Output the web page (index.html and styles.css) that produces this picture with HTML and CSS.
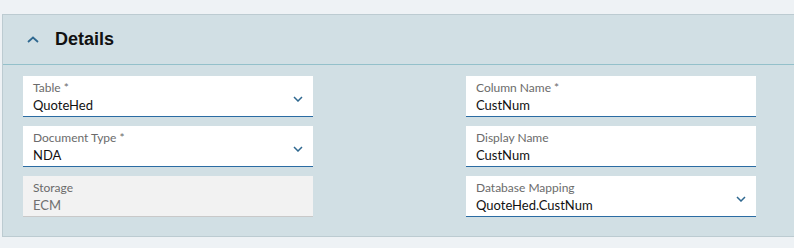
FILE: index.html
```html
<!DOCTYPE html>
<html lang="en">
<head>
    <meta charset="UTF-8">
    <title>Details</title>
    <link rel="stylesheet" href="styles.css">
</head>
<body>
    <div class="panel">
        <div class="panel-header">
            <svg class="toggle" width="12" height="7" viewBox="0 0 12 7">
                <path d="M1 6 L6 1.5 L11 6" fill="none" stroke="#2f6890" stroke-width="1.8"/>
            </svg>
            <h2>Details</h2>
        </div>

        <div class="panel-body">
            <div class="field">
                <div class="text">
                    <div class="label">Table *</div>
                    <div class="value">QuoteHed</div>
                </div>
                <svg class="caret" width="10" height="6" viewBox="0 0 10 6">
                    <path d="M1 1 L5 5 L9 1" fill="none" stroke="#2f6890" stroke-width="1.5"/>
                </svg>
            </div>
            <div class="field">
                <div class="text">
                    <div class="label">Column Name *</div>
                    <div class="value">CustNum</div>
                </div>
            </div>

            <div class="field">
                <div class="text">
                    <div class="label">Document Type *</div>
                    <div class="value">NDA</div>
                </div>
                <svg class="caret" width="10" height="6" viewBox="0 0 10 6">
                    <path d="M1 1 L5 5 L9 1" fill="none" stroke="#2f6890" stroke-width="1.5"/>
                </svg>
            </div>
            <div class="field">
                <div class="text">
                    <div class="label">Display Name</div>
                    <div class="value">CustNum</div>
                </div>
            </div>

            <div class="field disabled">
                <div class="text">
                    <div class="label">Storage</div>
                    <div class="value">ECM</div>
                </div>
            </div>
            <div class="field">
                <div class="text">
                    <div class="label">Database Mapping</div>
                    <div class="value">QuoteHed.CustNum</div>
                </div>
                <svg class="caret" width="10" height="6" viewBox="0 0 10 6">
                    <path d="M1 1 L5 5 L9 1" fill="none" stroke="#2f6890" stroke-width="1.5"/>
                </svg>
            </div>
        </div>
    </div>
</body>
</html>
```

FILE: styles.css
```css
body {
    margin: 0;
    background: #eef2f5;
    font-family: "Lato", "Liberation Sans", sans-serif;
}
.panel {
    margin: 14px 0 0 2px;
    background: #d1dfe4;
    border: 1px solid #bccbd1;
    border-right: none;
    height: 221px;
}
.panel-header {
    display: flex;
    align-items: center;
    height: 49px;
    padding-left: 24px;
    border-bottom: 1px solid #93c0ca;
}
.toggle {
    margin-right: 16px;
}
.panel-header h2 {
    margin: 0;
    font-family: "Liberation Sans", Arial, sans-serif;
    font-size: 18px;
    font-weight: bold;
    color: #111;
}
.panel-body {
    display: grid;
    grid-template-columns: 290px 290px;
    column-gap: 153px;
    row-gap: 9px;
    padding: 11px 0 0 20px;
}
.field {
    display: flex;
    align-items: center;
    height: 40px;
    padding: 0 10px;
    background: #fff;
    border-bottom: 1px solid #2b6ca3;
}
.field .text {
    flex: 1;
    padding-top: 2px;
}
.label {
    font-size: 12px;
    line-height: 16px;
    color: #6b6b6b;
}
.value {
    font-size: 13px;
    line-height: 18px;
    color: #111;
}
.caret {
    margin-top: 5px;
}
.field.disabled {
    background: #f2f2f2;
    border-bottom-color: #c9c9c9;
}
.field.disabled .value {
    color: #6f6f6f;
}
```
